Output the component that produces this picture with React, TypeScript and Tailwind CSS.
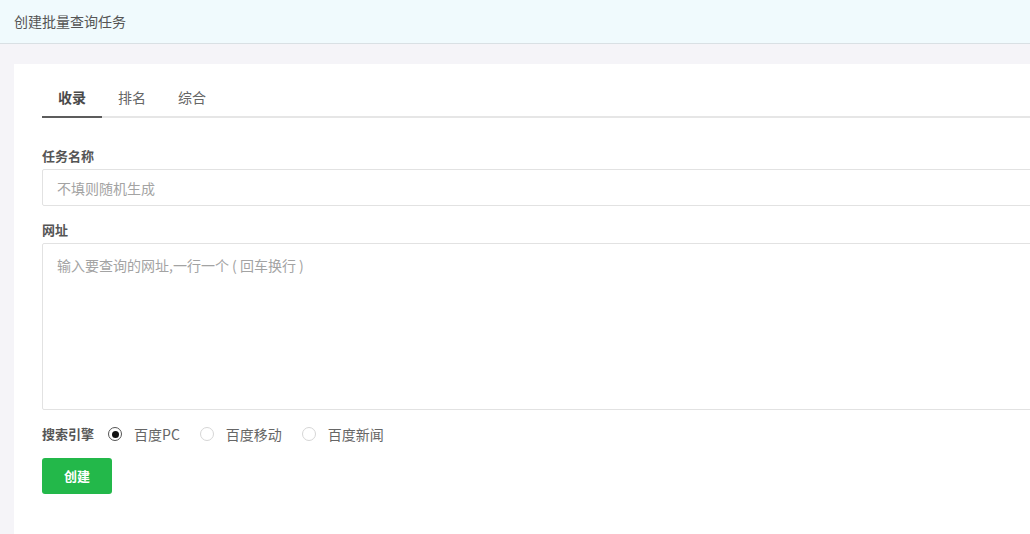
import { useState } from 'react';

const tabs = ['收录', '排名', '综合'];
const engines = ['百度PC', '百度移动', '百度新闻'];

export default function App() {
  const [tab, setTab] = useState(0);
  const [engine, setEngine] = useState(0);

  return (
    <div
      className="h-[534px] w-[1030px] overflow-hidden bg-[#f5f4f8] text-[#555]"
      style={{ fontFamily: '"Noto Sans CJK SC", "Liberation Sans", sans-serif' }}
    >
      <div className="flex h-[44px] items-center border-b border-[#d9e0e4] bg-[#f0fafd] pl-[14px] text-[14px] text-[#555]">
        创建批量查询任务
      </div>

      <div className="pl-[14px] pt-[20px]">
        <div className="h-[480px] w-[1120px] bg-white pl-[28px] pt-[14px]">
          <div className="flex border-b-2 border-[#e6e6e6]">
            {tabs.map((name, i) => (
              <button
                key={name}
                type="button"
                onClick={() => setTab(i)}
                className={
                  i === tab
                    ? '-mb-[2px] flex h-[40px] items-center border-b-2 border-[#5c5c5c] px-[16px] text-[14px] font-semibold text-[#4a4a4a]'
                    : '-mb-[2px] flex h-[40px] items-center border-b-2 border-transparent px-[16px] text-[14px] text-[#666]'
                }
              >
                {name}
              </button>
            ))}
          </div>

          <div className="mt-[28px] text-[13px] font-bold leading-[20px] text-[#555]">任务名称</div>
          <input
            className="mt-[3px] h-[37px] w-full rounded-[2px] border border-[#e2e2e2] px-[14px] text-[14px] text-[#555] outline-none placeholder:text-[#a3a3a3]"
            placeholder="不填则随机生成"
          />

          <div className="mt-[14px] text-[13px] font-bold leading-[20px] text-[#555]">网址</div>
          <textarea
            className="mt-[3px] block h-[167px] w-full resize-none rounded-[2px] border border-[#e2e2e2] px-[14px] py-[11px] text-[14px] leading-[20px] text-[#555] outline-none placeholder:text-[#a3a3a3]"
            placeholder="输入要查询的网址,一行一个 ( 回车换行 )"
          />

          <div className="mt-[14px] flex h-[20px] items-center text-[14px]">
            <span className="mr-[14px] text-[13px] font-bold text-[#555]">搜索引擎</span>
            {engines.map((name, i) => (
              <label key={name} className="mr-[20px] flex cursor-pointer items-center" onClick={() => setEngine(i)}>
                <span
                  className={
                    i === engine
                      ? 'flex h-[14px] w-[14px] items-center justify-center rounded-full border border-[#555]'
                      : 'flex h-[14px] w-[14px] items-center justify-center rounded-full border border-[#d6d6d6]'
                  }
                >
                  {i === engine ? <span className="h-[7px] w-[7px] rounded-full bg-[#111]" /> : null}
                </span>
                <span className="ml-[12px] text-[#666]">{name}</span>
              </label>
            ))}
          </div>

          <button
            type="button"
            className="mt-[14px] h-[36px] w-[70px] rounded-[3px] bg-[#23b84a] text-[13px] font-bold text-white"
          >
            创建
          </button>
        </div>
      </div>
    </div>
  );
}
